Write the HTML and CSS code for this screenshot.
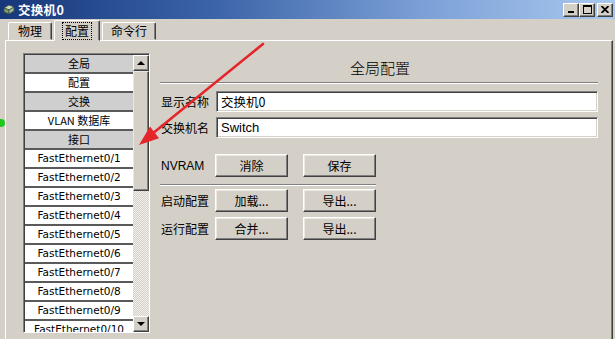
FILE: index.html
```html
<!DOCTYPE html>
<html>
<head>
<meta charset="utf-8">
<link rel="stylesheet" href="styles.css">
</head>
<body>
<div class="window">
  <div class="titlebar">
    <svg class="appicon" width="12" height="11" viewBox="0 0 12 11">
      <path d="M1 4 L6 1 L11 3 L6 6 Z" fill="#c8d8c0" stroke="#405040" stroke-width="0.8"/>
      <path d="M1 4 L6 6 L6 10 L1 8 Z" fill="#7a9a70" stroke="#405040" stroke-width="0.8"/>
      <path d="M6 6 L11 3 L11 7 L6 10 Z" fill="#9ab890" stroke="#405040" stroke-width="0.8"/>
    </svg>
    <span class="title">交换机0</span>
    <div class="controls">
      <span class="tbtn"><svg width="8" height="7" viewBox="0 0 8 7"><rect x="1" y="5" width="6" height="2" fill="#000"/></svg></span>
      <span class="tbtn"><svg width="9" height="9" viewBox="0 0 9 9"><rect x="0.5" y="0.5" width="8" height="8" fill="none" stroke="#000"/><rect x="0" y="0" width="9" height="2" fill="#000"/></svg></span>
      <span class="tbtn close"><svg width="8" height="7" viewBox="0 0 8 7"><path d="M0.5 0 L7.5 7 M7.5 0 L0.5 7" stroke="#000" stroke-width="1.8"/></svg></span>
    </div>
  </div>
  <div class="tabs">
    <div class="tab">物理</div>
    <div class="tab active"><span class="focus">配置</span></div>
    <div class="tab wide">命令行</div>
  </div>
  <div class="panel">
    <div class="listbox">
      <div class="items">
        <div class="item head">全局</div>
        <div class="item">配置</div>
        <div class="item head">交换</div>
        <div class="item">VLAN 数据库</div>
        <div class="item head">接口</div>
        <div class="item en">FastEthernet0/1</div>
        <div class="item en">FastEthernet0/2</div>
        <div class="item en">FastEthernet0/3</div>
        <div class="item en">FastEthernet0/4</div>
        <div class="item en">FastEthernet0/5</div>
        <div class="item en">FastEthernet0/6</div>
        <div class="item en">FastEthernet0/7</div>
        <div class="item en">FastEthernet0/8</div>
        <div class="item en">FastEthernet0/9</div>
        <div class="item en">FastEthernet0/10</div>
      </div>
      <div class="scrollbar">
        <div class="sbtn"><span class="tri up"></span></div>
        <div class="thumb"></div>
        <div class="track"></div>
        <div class="sbtn"><span class="tri down"></span></div>
      </div>
    </div>
    <div class="main">
      <div class="heading">全局配置</div>
      <div class="rule"></div>
      <div class="row field first">
        <span class="label">显示名称</span>
        <div class="input">交换机0</div>
      </div>
      <div class="row field">
        <span class="label">交换机名</span>
        <div class="input en">Switch</div>
      </div>
      <div class="row btnrow nvram">
        <span class="label en">NVRAM</span>
        <div class="btn">消除</div>
        <div class="btn">保存</div>
      </div>
      <div class="rule short"></div>
      <div class="row btnrow tight">
        <span class="label">启动配置</span>
        <div class="btn">加载...</div>
        <div class="btn">导出...</div>
      </div>
      <div class="row btnrow">
        <span class="label">运行配置</span>
        <div class="btn">合并...</div>
        <div class="btn">导出...</div>
      </div>
    </div>
  </div>
  <span class="greendot"></span>
  <svg class="arrow" width="615" height="339" viewBox="0 0 615 339">
    <line x1="263" y1="44" x2="152" y2="134" stroke="#e4262a" stroke-width="2.6" stroke-linecap="round"/>
    <path d="M139 145 L150 126.5 L159 138.3 Z" fill="#e4262a"/>
  </svg>
</div>
</body>
</html>
```
FILE: styles.css
```css
* { box-sizing: border-box; }
html, body { margin: 0; padding: 0; }
body { width: 615px; height: 339px; overflow: hidden; background: #d4d0c8; }

.window {
  position: relative;
  width: 615px;
  height: 339px;
  background: #d4d0c8;
  font-family: "Noto Sans CJK SC", "Liberation Sans", sans-serif;
  font-size: 12px;
  color: #000;
  overflow: hidden;
}

.titlebar {
  height: 19px;
  display: flex;
  align-items: center;
  padding-left: 3px;
  background: linear-gradient(to right, #16377a 0%, #3c64a8 35%, #7ea2d8 70%, #a9c8ee 100%);
}
.appicon { margin-right: 3px; }
.title {
  color: #fff;
  font-weight: bold;
  font-size: 12.5px;
  line-height: 19px;
  letter-spacing: 0.3px;
}
.controls { margin-left: auto; display: flex; gap: 0; margin-right: 2px; }
.tbtn {
  width: 16px;
  height: 14px;
  background: #d4d0c8;
  border: 1px solid;
  border-color: #fff #404040 #404040 #fff;
  box-shadow: inset -1px -1px #808080;
  display: flex;
  align-items: center;
  justify-content: center;
}
.tbtn.close { margin-left: 2px; }

.tabs {
  height: 21px;
  display: flex;
  align-items: flex-end;
  padding-left: 8px;
}
.tab {
  height: 18px;
  width: 44px;
  border: 1px solid;
  border-color: #fff #404040 transparent #fff;
  box-shadow: inset -1px 0 #808080;
  border-radius: 2px 2px 0 0;
  display: flex;
  align-items: center;
  justify-content: center;
  line-height: 14px;
  font-size: 12px;
}
.tab.active {
  height: 21px;
  width: 46px;
  margin: 0 2px 0 2px;
  position: relative;
  top: 1px;
  background: #d4d0c8;
  z-index: 1;
}
.tab.wide { width: 54px; }
.focus {
  outline: 1px dotted #000;
  outline-offset: 0;
  padding: 1px 2px;
}

.panel {
  display: flex;
  align-items: flex-start;
  height: 299px;
  margin-left: 5px;
  width: 608px;
  border-top: 1px solid #fff;
  border-left: 1px solid #fff;
  border-right: 1px solid #404040;
  box-shadow: inset -1px 0 #808080;
  padding: 12px 0 0 17px;
}

.listbox {
  width: 127px;
  height: 280px;
  display: flex;
  border: 1px solid;
  border-color: #808080 #fff #fff #808080;
  box-shadow: inset 1px 1px #404040;
  padding: 1px 0 0 1px;
  flex: none;
}
.items {
  width: 109px;
  overflow: hidden;
  height: 277px;
  background: #fff;
}
.item {
  height: 19px;
  border-bottom: 2px solid #5a5a5a;
  background: #fff;
  text-align: center;
  font-size: 11px;
  line-height: 17px;
  white-space: nowrap;
}
.item.head { background: #cfcfcf; }
.item.en { font-family: "DejaVu Sans", sans-serif; font-size: 10.5px; }

.scrollbar {
  width: 16px;
  display: flex;
  flex-direction: column;
  height: 277px;
}
.sbtn {
  height: 16px;
  flex: none;
  background: #d4d0c8;
  border: 1px solid;
  border-color: #fff #404040 #404040 #fff;
  box-shadow: inset -1px -1px #808080;
  display: flex;
  align-items: center;
  justify-content: center;
}
.tri { width: 0; height: 0; border-left: 4px solid transparent; border-right: 4px solid transparent; }
.tri.up { border-bottom: 4px solid #000; }
.tri.down { border-top: 4px solid #000; }
.thumb {
  height: 120px;
  flex: none;
  background: #d4d0c8;
  border: 1px solid;
  border-color: #e8e8e8 #404040 #404040 #e8e8e8;
  box-shadow: inset -1px -1px #808080;
}
.track {
  flex: 1;
  background-color: #e6e4de;
  background-image: repeating-conic-gradient(#d4d0c8 0 25%, #f2f0ec 0 50%);
  background-size: 2px 2px;
}

.main {
  margin-left: 10px;
  width: 438px;
  padding-top: 5px;
}
.heading {
  height: 20px;
  line-height: 20px;
  text-align: center;
  font-size: 15px;
  font-weight: 300;
  padding-left: 2px;
}
.rule {
  margin-top: 4px;
  height: 2px;
  border-top: 1px solid #808080;
  border-bottom: 1px solid #fff;
}
.rule.short { margin-top: 7px; width: 216px; }
.row { display: flex; align-items: center; }
.label {
  width: 55px;
  padding-left: 1px;
  flex: none;
  font-size: 12px;
  white-space: nowrap;
}
.label.en { font-family: "Liberation Sans", sans-serif; font-size: 12px; }
.field { height: 21px; margin-top: 5px; }
.field.first { margin-top: 7px; }
.input {
  margin-left: 1px;
  flex: 1;
  height: 21px;
  background: #fff;
  border: 1px solid;
  border-color: #808080 #fff #fff #808080;
  box-shadow: inset 1px 1px #404040, inset -1px -1px #d4d0c8;
  padding-left: 4px;
  line-height: 19px;
  font-size: 12.5px;
}
.input.en { font-family: "Liberation Sans", sans-serif; font-size: 13px; }
.btnrow { height: 23px; margin-top: 5px; }
.btnrow.nvram { margin-top: 16px; }
.btnrow.tight { margin-top: 3px; }
.btn {
  width: 73px;
  height: 23px;
  margin-right: 15px;
  background: #d4d0c8;
  border: 1px solid;
  border-color: #fff #404040 #404040 #fff;
  box-shadow: inset -1px -1px #808080, inset 1px 1px #ece9e2;
  display: flex;
  align-items: center;
  justify-content: center;
  font-size: 12px;
}

.greendot {
  position: absolute;
  left: -3px;
  top: 119px;
  width: 8px;
  height: 8px;
  border-radius: 50%;
  background: #1ec81e;
}
.arrow {
  position: absolute;
  left: 0;
  top: 0;
  pointer-events: none;
}
```
